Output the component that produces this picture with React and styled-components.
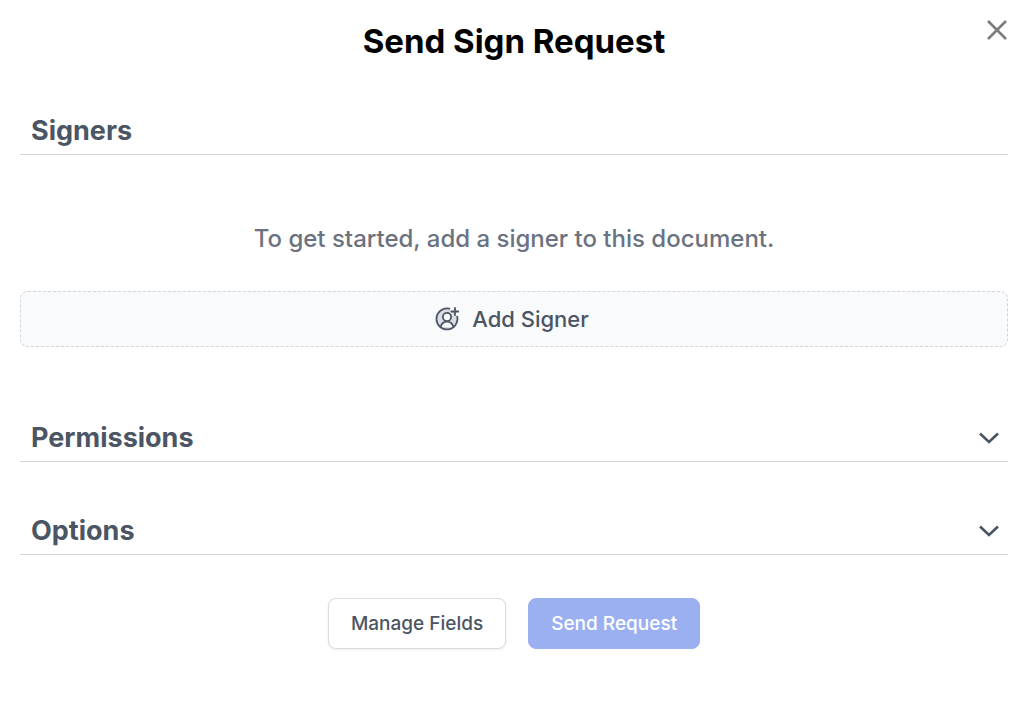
import React from 'react'
import styled, { createGlobalStyle } from 'styled-components'

const App = () => {
  return (
    <>
      <GlobalStyle />
      <Dialog role="dialog" aria-labelledby="dialog-title">
        <Title id="dialog-title">Send Sign Request</Title>
        <Close type="button" aria-label="Close">
          <svg width="20" height="20" viewBox="0 0 20 20" fill="none" stroke="currentColor" strokeWidth="2.6">
            <path d="M1 1l18 18M19 1L1 19" />
          </svg>
        </Close>

        <Signers>
          <SectionHeader>Signers</SectionHeader>
          <Message>To get started, add a signer to this document.</Message>
          <AddSigner type="button">
            <AddSignerIcon />
            Add Signer
          </AddSigner>
        </Signers>

        <Sections>
          <SectionToggle type="button" aria-expanded="false">
            Permissions
            <Chevron />
          </SectionToggle>
          <SectionToggle type="button" aria-expanded="false">
            Options
            <Chevron />
          </SectionToggle>
        </Sections>

        <Actions>
          <Button type="button">Manage Fields</Button>
          <Button type="button" $primary disabled>Send Request</Button>
        </Actions>
      </Dialog>
    </>
  )
}

const AddSignerIcon = () => (
  <svg width="24" height="24" viewBox="0 0 24 24" fill="none" stroke="currentColor" strokeWidth="1.8" strokeLinecap="round">
    <path d="M14.5 1.7A10.4 10.4 0 1 0 22.1 9.6L19 5.5z" fill="#d9dce1" stroke="none" />
    <path d="M14.3 1.7A10.5 10.5 0 1 0 22.2 9.6" />
    <circle cx="12" cy="10" r="4.1" fill="#f9fafb" />
    <path d="M5.6 20C6.4 16.7 8.8 14.6 12 14.6s5.6 2.1 6.4 5.4" fill="#f9fafb" />
    <path d="M20 1v7M16.5 4.5h7" />
  </svg>
)

const Chevron = () => (
  <svg width="20" height="12" viewBox="0 0 20 12" fill="none" stroke="currentColor" strokeWidth="2.6">
    <path d="M1 1.5l9 8.5 9-8.5" />
  </svg>
)

const GlobalStyle = createGlobalStyle`
  * {
    box-sizing: border-box;
  }

  body {
    margin: 0;
    background-color: #fff;
    color: #4b5563;
    font-family: Inter, "Liberation Sans", sans-serif;
  }

  button {
    font-family: inherit;
    cursor: pointer;
  }
`

const Dialog = styled.main`
  position: relative;
  padding: 20px 16px 20px 20px;
`

const Title = styled.h1`
  margin: 0;
  color: #000;
  font-size: 33px;
  font-weight: 700;
  line-height: 42px;
  text-align: center;
`

const Close = styled.button`
  position: absolute;
  top: 12px;
  right: 9px;
  display: flex;
  padding: 8px;
  border: 0;
  background: none;
  color: #7c7c7c;
`

const Signers = styled.section`
  margin-top: 44px;
`

const SectionHeader = styled.h2`
  margin: 0;
  padding: 7px 11px 5px;
  border-bottom: 1px solid #d1d5db;
  font-size: 27px;
  font-weight: 700;
  line-height: 36px;
`

const SectionToggle = styled.button`
  display: flex;
  align-items: center;
  justify-content: space-between;
  width: 100%;
  padding: 7px 9px 5px 11px;
  border: 0;
  border-bottom: 1px solid #d1d5db;
  background: none;
  color: inherit;
  font-size: 27px;
  font-weight: 700;
  line-height: 36px;
`

const Message = styled.p`
  margin: 64px 0 32px;
  color: #6b7280;
  font-size: 24px;
  font-weight: 500;
  line-height: 40px;
  text-align: center;
`

const AddSigner = styled.button`
  display: flex;
  align-items: center;
  justify-content: center;
  column-gap: 13px;
  width: 100%;
  height: 56px;
  padding: 0 10px 0 6px;
  border: 1px dashed #d1d5db;
  border-radius: 8px;
  background-color: #f9fafb;
  color: #4b5563;
  font-size: 22px;
  font-weight: 500;
`

const Sections = styled.div`
  display: flex;
  flex-direction: column;
  row-gap: 44px;
  margin-top: 66px;
`

const Actions = styled.div`
  display: flex;
  justify-content: center;
  column-gap: 22px;
  margin-top: 43px;
`

const Button = styled.button`
  height: 51px;
  padding: 0 22px;
  border: 1px solid ${({ $primary }) => ($primary ? '#9bb0f1' : '#d9dbe0')};
  border-radius: 8px;
  background-color: ${({ $primary }) => ($primary ? '#9bb0f1' : '#fff')};
  box-shadow: ${({ $primary }) => ($primary ? 'none' : '0 1px 3px rgba(0, 0, 0, .08)')};
  color: ${({ $primary }) => ($primary ? '#fff' : '#4b5563')};
  font-size: 19px;
  font-weight: 500;

  &:disabled {
    cursor: not-allowed;
  }
`

export default App
